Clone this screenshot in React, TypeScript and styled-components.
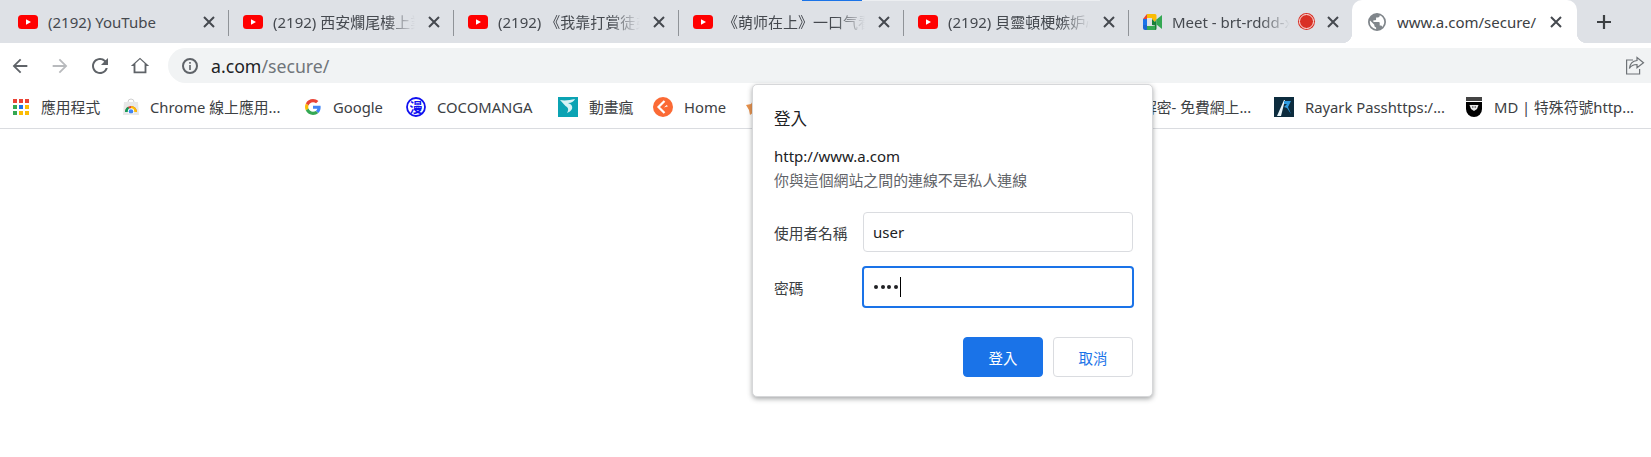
import React from "react";
import styled, { createGlobalStyle } from "styled-components";

const Global = createGlobalStyle`
  html, body { margin: 0; padding: 0; background: #fff; overflow: hidden; }
  #root { height: 457px; }
  * { box-sizing: border-box; }
`;

const FONT = `"Noto Sans", "Noto Sans CJK TC", sans-serif`;

const Page = styled.div`
  position: relative;
  width: 1651px;
  height: 457px;
  background: #fff;
  font-family: ${FONT};
  color: #3c4043;
  overflow: hidden;
`;

const TabStrip = styled.div`
  position: relative;
  display: flex;
  align-items: center;
  height: 43px;
  padding-left: 4px;
  background: #dee1e6;
`;

const CaptureLine = styled.div`
  position: absolute;
  top: 0;
  left: 802px;
  width: 60px;
  height: 1px;
  background: #1a73e8;
`;

const CaptureTrack = styled.div`
  position: absolute;
  top: 0;
  left: 862px;
  width: 238px;
  height: 1px;
  background: #eceef1;
`;

const Tab = styled.div<{ $w: number }>`
  flex: none;
  display: flex;
  align-items: center;
  width: ${(p) => p.$w}px;
  height: 43px;
  padding: 0 9px 0 14px;
`;

const ActiveTab = styled(Tab)`
  position: relative;
  height: 43px;
  padding: 0 11px 0 16px;
  background: #fff;
  border-radius: 10px 10px 0 0;
  &::before,
  &::after {
    content: "";
    position: absolute;
    bottom: 0;
    width: 10px;
    height: 10px;
  }
  &::before {
    left: -10px;
    background: radial-gradient(circle at 0 0, transparent 10px, #fff 10.5px);
  }
  &::after {
    right: -10px;
    background: radial-gradient(circle at 100% 0, transparent 10px, #fff 10.5px);
  }
`;

const TabSep = styled.div`
  flex: none;
  width: 1px;
  height: 26px;
  margin-top: 2px;
  background: #8f9398;
`;

const TabTitle = styled.span<{ $fade?: boolean }>`
  flex: 1;
  min-width: 0;
  margin: 0 ${(p) => (p.$fade ? 9 : 0)}px 0 10px;
  font-size: 15px;
  line-height: 20px;
  color: #45494f;
  white-space: nowrap;
  overflow: hidden;
  ${(p) =>
    p.$fade
      ? `-webkit-mask-image: linear-gradient(to right, #000 calc(100% - 30px), transparent);
         mask-image: linear-gradient(to right, #000 calc(100% - 30px), transparent);`
      : ""}
`;

const ActiveTitle = styled(TabTitle)`
  color: #3c4043;
  margin-left: 11px;
`;

const CloseBtn = styled.span`
  flex: none;
  display: flex;
  align-items: center;
  justify-content: center;
  width: 20px;
  height: 20px;
`;

const RecDot = styled.span`
  flex: none;
  width: 15px;
  height: 15px;
  margin-right: 9px;
  border-radius: 50%;
  background: #d93025;
  border: 1.5px solid #fce8e6;
  box-shadow: 0 0 0 1px #d93025;
`;

const NewTab = styled.span`
  flex: none;
  display: flex;
  justify-content: center;
  width: 24px;
  margin-left: 15px;
`;

const Toolbar = styled.div`
  display: flex;
  align-items: center;
  height: 45px;
  background: #fff;
`;

const NavBtn = styled.span`
  flex: none;
  display: flex;
  align-items: center;
  justify-content: center;
  width: 40px;
  height: 35px;
`;

const Omnibox = styled.div`
  flex: 1;
  display: flex;
  align-items: center;
  height: 35px;
  margin-left: 8px;
  padding: 0 6px 0 13px;
  border-radius: 18px 0 0 18px;
  background: #f1f3f4;
`;

const Url = styled.div`
  flex: 1;
  margin-left: 12px;
  font-size: 17.7px;
  line-height: 24px;
  color: #70757a;
`;

const Host = styled.span`
  color: #202124;
`;

const Bookmarks = styled.div`
  display: flex;
  align-items: center;
  height: 41px;
  border-bottom: 1px solid #dadce0;
  padding: 0 0 3px 13px;
`;

const Bookmark = styled.div<{ $w: number; $gap?: number }>`
  flex: none;
  display: flex;
  align-items: center;
  gap: ${(p) => p.$gap ?? 11}px;
  width: ${(p) => p.$w}px;
  font-size: 14.8px;
  line-height: 20px;
  color: #3c4043;
  white-space: nowrap;
  overflow: hidden;
`;

const Dialog = styled.div`
  position: absolute;
  left: 752px;
  top: 84px;
  width: 401px;
  height: 313px;
  padding: 21px 19px 0 21px;
  background: #fff;
  border-radius: 5px;
  border: 1px solid #d6d7d9;
  box-shadow: 0 2px 5px rgba(60, 64, 67, 0.45);
`;

const DialogTitle = styled.div`
  font-size: 16.5px;
  line-height: 26px;
  color: #202124;
`;

const Origin = styled.div`
  margin-top: 13px;
  font-size: 15px;
  line-height: 22px;
  color: #202124;
`;

const Notice = styled.div`
  margin-top: 2px;
  font-size: 14.9px;
  line-height: 22px;
  color: #5f6368;
`;

const Form = styled.div`
  display: grid;
  grid-template-columns: 89px 1fr;
  row-gap: 14px;
  align-items: center;
  margin-top: 21px;
`;

const FieldLabel = styled.label`
  font-size: 14.7px;
  color: #3c4043;
`;

const Field = styled.div<{ $focus?: boolean }>`
  display: flex;
  align-items: center;
  height: ${(p) => (p.$focus ? 42 : 40)}px;
  margin: ${(p) => (p.$focus ? "0 -1px 0 -1px" : "0")};
  padding-left: ${(p) => (p.$focus ? 10 : 9)}px;
  border-radius: 4px;
  border: ${(p) => (p.$focus ? "2px solid #1a73e8" : "1px solid #dadce0")};
  font-size: 15px;
  color: #202124;
`;

const Dots = styled.span`
  display: flex;
  gap: 2.5px;
`;

const Dot = styled.span`
  width: 4px;
  height: 4px;
  border-radius: 50%;
  background: #202124;
`;

const Caret = styled.span`
  width: 1px;
  height: 20px;
  margin-left: 2px;
  background: #000;
`;

const Actions = styled.div`
  display: flex;
  justify-content: flex-end;
  gap: 10px;
  margin-top: 29px;
`;

const Button = styled.button<{ $primary?: boolean }>`
  width: 80px;
  height: 40px;
  padding: 0;
  border-radius: 4px;
  font-family: ${FONT};
  font-size: 14.4px;
  border: 1px solid ${(p) => (p.$primary ? "#1a73e8" : "#dadce0")};
  background: ${(p) => (p.$primary ? "#1a73e8" : "#fff")};
  color: ${(p) => (p.$primary ? "#fff" : "#1a73e8")};
`;

const X = () => (
  <svg width="12" height="12" viewBox="0 0 12 12">
    <path d="M1 1l10 10M11 1L1 11" stroke="#45494f" strokeWidth="2" />
  </svg>
);

const Close = () => (
  <CloseBtn>
    <X />
  </CloseBtn>
);

const YouTube = () => (
  <svg width="20" height="14" viewBox="0 0 20 14" style={{ flex: "none" }}>
    <rect width="20" height="14" rx="3.5" fill="#f00" />
    <path d="M8 4.2L13 7l-5 2.8z" fill="#fff" />
  </svg>
);

const MeetIcon = () => (
  <svg width="19" height="16" viewBox="0 0 19 16" style={{ flex: "none" }}>
    <path d="M4 0h8v4H4z" fill="#fbbc04" />
    <path d="M4 0v5H0z" fill="#ea4335" />
    <path d="M0 5h4v6H0z" fill="#1a73e8" />
    <path d="M0 11h4v5H2a2 2 0 0 1-2-2z" fill="#1967d2" />
    <path d="M4 12h8v4H4z" fill="#34a853" />
    <path d="M12 0a1.5 1.5 0 0 1 1.5 1.5V5L12 8 9 5V4h3z" fill="#fbbc04" />
    <path d="M13.5 5v9.5A1.5 1.5 0 0 1 12 16V11.5L9 11V5l3 3z" fill="#188038" />
    <path d="M13.5 5.5L19 1v14l-5.5-4.5z" fill="#34a853" />
  </svg>
);

const Globe = () => (
  <svg width="18" height="18" viewBox="0 0 24 24" style={{ flex: "none" }}>
    <path
      fill="#80868b"
      d="M12 0a12 12 0 1 0 0 24 12 12 0 0 0 0-24zM10.8 21.5A9.6 9.6 0 0 1 2.4 12c0-.7.1-1.4.3-2.1l5.7 5.7v1.2a2.4 2.4 0 0 0 2.4 2.4v2.3zm8.3-3a2.4 2.4 0 0 0-2.3-1.7h-1.2v-3.6a1.2 1.2 0 0 0-1.2-1.2H7.2V9.6h2.4a1.2 1.2 0 0 0 1.2-1.2V6h2.4a2.4 2.4 0 0 0 2.4-2.4v-.5a9.6 9.6 0 0 1 3.5 15.4z"
    />
  </svg>
);

const Back = ({ color }: { color: string }) => (
  <svg width="22" height="22" viewBox="0 0 24 24">
    <path fill={color} d="M20 11H7.83l5.59-5.59L12 4l-8 8 8 8 1.41-1.41L7.83 13H20v-2z" />
  </svg>
);

const Forward = ({ color }: { color: string }) => (
  <svg width="22" height="22" viewBox="0 0 24 24">
    <path fill={color} d="M12 4l-1.41 1.41L16.17 11H4v2h12.17l-5.58 5.59L12 20l8-8z" />
  </svg>
);

const Reload = () => (
  <svg width="24" height="24" viewBox="0 0 24 24">
    <path
      fill="#5f6368"
      d="M17.65 6.35A7.958 7.958 0 0 0 12 4c-4.42 0-7.99 3.58-7.99 8s3.57 8 7.99 8c3.73 0 6.84-2.55 7.73-6h-2.08A5.99 5.99 0 0 1 12 18c-3.31 0-6-2.69-6-6s2.69-6 6-6c1.66 0 3.14.69 4.22 1.78L13 11h7V4l-2.35 2.35z"
    />
  </svg>
);

const Home = () => (
  <svg width="22" height="22" viewBox="0 0 24 24">
    <path fill="#5f6368" d="M12 3L2 12h3v8h14v-8h3L12 3zm5 15H7v-8.81l5-4.5 5 4.5V18z" />
  </svg>
);

const Info = () => (
  <svg width="18" height="18" viewBox="0 0 18 18" style={{ flex: "none" }}>
    <circle cx="9" cy="9" r="7" fill="none" stroke="#5f6368" strokeWidth="2" />
    <path d="M8.2 8h1.6v5H8.2zM8.2 5h1.6v1.7H8.2z" fill="#5f6368" />
  </svg>
);

const Share = () => (
  <svg width="20" height="20" viewBox="0 0 20 20" style={{ flex: "none" }} fill="none" stroke="#6f7377" strokeWidth="1.2">
    <path d="M8 4H1.6v14h13v-5" />
    <path d="M12 1.5l6.5 5.2-6.5 5V8.5c-3.5 0-6 1.2-7.6 4 .4-4 3-7.5 7.6-8z" />
  </svg>
);

const Apps = () => (
  <svg width="16" height="16" viewBox="0 0 16 16" style={{ flex: "none" }}>
    {[
      ["#ea4335", "#ea4335", "#ea4335"],
      ["#34a853", "#1a73e8", "#fbbc04"],
      ["#34a853", "#fbbc04", "#fbbc04"],
    ].map((row, r) =>
      row.map((c, i) => <rect key={`${r}${i}`} x={i * 6} y={r * 6} width="4" height="4" fill={c} />),
    )}
  </svg>
);

const ChromeStore = () => (
  <svg width="16" height="17" viewBox="0 0 16 17" style={{ flex: "none" }}>
    <path d="M1 4h14l1 13H0z" fill="#e8e8e8" />
    <path d="M5 4a3 3 0 0 1 6 0" stroke="#cfcfcf" fill="none" />
    <path d="M2 14a6 6 0 0 1 12 0z" fill="#db4437" />
    <path d="M2 14a6 6 0 0 1 3-5.2L8 14z" fill="#0f9d58" />
    <path d="M8 8a6 6 0 0 1 6 6H8z" fill="#fbbc04" />
    <circle cx="8" cy="13.5" r="3.2" fill="#fff" />
    <circle cx="8" cy="13.5" r="2.3" fill="#4285f4" />
    <rect y="15" width="16" height="2" fill="#e8e8e8" opacity="0.6" />
  </svg>
);

const Google = () => (
  <svg width="16" height="16" viewBox="0 0 48 48" style={{ flex: "none" }}>
    <path fill="#EA4335" d="M24 9.5c3.5 0 6.7 1.2 9.2 3.6l6.9-6.9C35.9 2.4 30.5 0 24 0 14.6 0 6.5 5.4 2.6 13.2l8 6.2C12.4 13.7 17.7 9.5 24 9.5z" />
    <path fill="#4285F4" d="M46.9 24.5c0-1.6-.2-3.1-.4-4.5H24v9h12.9c-.6 3-2.2 5.5-4.7 7.2l7.7 6c4.5-4.2 7-10.3 7-17.7z" />
    <path fill="#FBBC05" d="M10.5 28.6c-.5-1.4-.8-3-.8-4.6s.3-3.2.8-4.6l-8-6.2C.9 16.5 0 20.1 0 24s.9 7.5 2.6 10.8l7.9-6.2z" />
    <path fill="#34A853" d="M24 48c6.5 0 11.9-2.1 15.9-5.8l-7.7-6c-2.1 1.4-4.9 2.3-8.2 2.3-6.3 0-11.6-4.2-13.5-9.9l-8 6.2C6.5 42.6 14.6 48 24 48z" />
  </svg>
);

const CocoGlyph = styled.text`
  font-family: "Noto Sans CJK TC", sans-serif;
  font-size: 13px;
  font-weight: 700;
  fill: #1010f0;
`;

const Coco = () => (
  <svg width="20" height="20" viewBox="0 0 20 20" style={{ flex: "none" }}>
    <circle cx="10" cy="10" r="9" fill="#fff" stroke="#1010f0" strokeWidth="1.8" />
    <CocoGlyph x="10" y="14.5" textAnchor="middle">漫</CocoGlyph>
  </svg>
);

const Anime = () => (
  <svg width="20" height="20" viewBox="0 0 20 20" style={{ flex: "none" }}>
    <rect width="20" height="20" fill="#0ba3b3" />
    <path d="M2 3c5 1 10 0 15-1-1 2-3 4-7 4 3 1 5 3 4 6-1 2-3 3-5 4 1-2 2-4 0-6-2-1-4-4-7-7z" fill="#d8f3f5" />
  </svg>
);

const HomeBm = () => (
  <svg width="20" height="20" viewBox="0 0 20 20" style={{ flex: "none" }}>
    <circle cx="10" cy="10" r="10" fill="#fb6a35" />
    <path d="M11.5 4L5.5 10l6 6" fill="none" stroke="#fff" strokeWidth="2.2" />
    <path d="M11 10.5l2.6-2.6 1.4 1.4z" fill="#fff" />
  </svg>
);

const OrangeBm = () => (
  <svg width="18" height="18" viewBox="0 0 18 18" style={{ flex: "none" }}>
    <path d="M9 1l3 5 5 1-3 5-1 5-4-3-4 3-1-5-3-5 5-1z" fill="#e8914a" />
  </svg>
);

const Rayark = () => (
  <svg width="20" height="20" viewBox="0 0 20 20" style={{ flex: "none" }}>
    <rect width="20" height="20" fill="#0d2c3e" />
    <path d="M3 19L10 3l1 0-4 16z" fill="#eaf6fb" />
    <path d="M10 4h7l-3 6 3 7-4-6-3-1 3-3h-3z" fill="#2f9be0" />
  </svg>
);

const MdBadge = () => (
  <svg width="18" height="20" viewBox="0 0 18 20" style={{ flex: "none" }}>
    <rect x="1" y="0" width="16" height="4" fill="#444" />
    <path d="M1 5h16v7a8 8 0 0 1-16 0z" fill="#000" />
    <path d="M4.5 8h9l-1.5 4-3 2-3-2z" fill="#e8e8e8" />
    <path d="M7 10h1.5M9.5 10H11" stroke="#222" strokeWidth="1" />
  </svg>
);

const tabs = [
  "(2192) YouTube",
  "(2192) 西安爛尾樓上業主的苦",
  "(2192) 《我靠打賞徒弟成為最強",
  "《萌师在上》一口气看完",
  "(2192) 貝靈頓梗嫉妒心強的狗",
];

export default function App() {
  return (
    <Page>
      <Global />
      <TabStrip>
        {tabs.map((t, i) => (
          <React.Fragment key={t}>
            <Tab $w={224}>
              <YouTube />
              <TabTitle $fade={i > 0}>{t}</TabTitle>
              <Close />
            </Tab>
            <TabSep />
          </React.Fragment>
        ))}
        <Tab $w={223}>
          <MeetIcon />
          <TabTitle $fade>Meet - brt-rddd-xyz</TabTitle>
          <RecDot />
          <Close />
        </Tab>
        <ActiveTab $w={225}>
          <Globe />
          <ActiveTitle>www.a.com/secure/</ActiveTitle>
          <Close />
        </ActiveTab>
        <NewTab>
          <svg width="16" height="16" viewBox="0 0 16 16">
            <path d="M8 1v14M1 8h14" stroke="#3c4043" strokeWidth="2.2" />
          </svg>
        </NewTab>
        <CaptureTrack />
        <CaptureLine />
      </TabStrip>
      <Toolbar>
        <NavBtn><Back color="#5f6368" /></NavBtn>
        <NavBtn><Forward color="#b8babd" /></NavBtn>
        <NavBtn><Reload /></NavBtn>
        <NavBtn><Home /></NavBtn>
        <Omnibox>
          <Info />
          <Url><Host>a.com</Host>/secure/</Url>
          <Share />
        </Omnibox>
      </Toolbar>
      <Bookmarks>
        <Bookmark $w={110} $gap={12}><Apps />應用程式</Bookmark>
        <Bookmark $w={182}><ChromeStore />Chrome 線上應用...</Bookmark>
        <Bookmark $w={101} $gap={12}><Google />Google</Bookmark>
        <Bookmark $w={152}><Coco />COCOMANGA</Bookmark>
        <Bookmark $w={95}><Anime />動畫瘋</Bookmark>
        <Bookmark $w={92}><HomeBm />Home</Bookmark>
        <Bookmark $w={368}><OrangeBm /></Bookmark>
        <Bookmark $w={161}><OrangeBm />解密- 免費網上...</Bookmark>
        <Bookmark $w={191}><Rayark />Rayark Passhttps:/...</Bookmark>
        <Bookmark $w={170}><MdBadge />MD | 特殊符號http...</Bookmark>
      </Bookmarks>
      <Dialog>
        <DialogTitle>登入</DialogTitle>
        <Origin>http://www.a.com</Origin>
        <Notice>你與這個網站之間的連線不是私人連線</Notice>
        <Form>
          <FieldLabel>使用者名稱</FieldLabel>
          <Field>user</Field>
          <FieldLabel>密碼</FieldLabel>
          <Field $focus>
            <Dots><Dot /><Dot /><Dot /><Dot /></Dots>
            <Caret />
          </Field>
        </Form>
        <Actions>
          <Button $primary>登入</Button>
          <Button>取消</Button>
        </Actions>
      </Dialog>
    </Page>
  );
}
